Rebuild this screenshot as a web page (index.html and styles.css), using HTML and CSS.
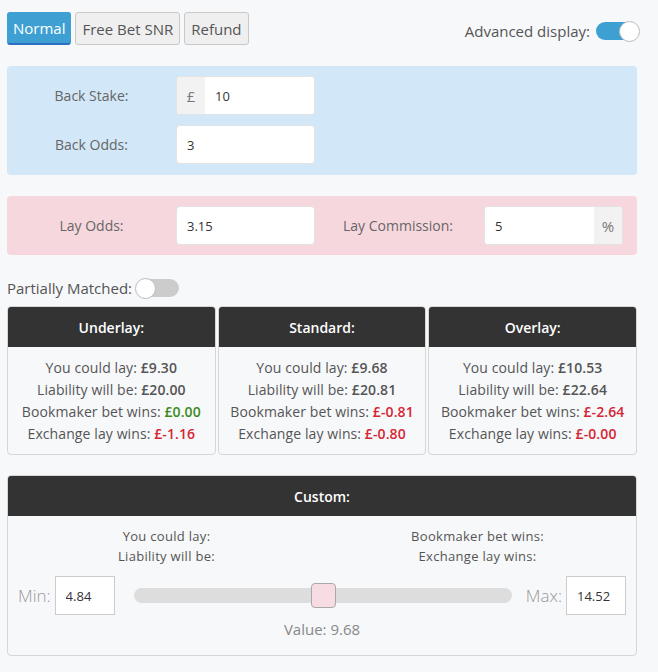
FILE: index.html
```html
<!DOCTYPE html>
<html lang="en">
<head>
    <meta charset="UTF-8">
    <title>Matched Betting Calculator</title>
    <link rel="stylesheet" href="styles.css">
</head>
<body>
    <div class="calc">
        <div class="top-bar">
            <div class="tabs">
                <button class="tab active">Normal</button>
                <button class="tab">Free Bet SNR</button>
                <button class="tab">Refund</button>
            </div>
            <div class="adv">
                <span>Advanced display:</span>
                <span class="switch on"><span class="knob"></span></span>
            </div>
        </div>

        <div class="panel back">
            <div class="field-row">
                <label class="lbl">Back Stake:</label>
                <div class="input-group">
                    <span class="addon">£</span>
                    <input type="text" value="10">
                </div>
            </div>
            <div class="field-row">
                <label class="lbl">Back Odds:</label>
                <input class="solo" type="text" value="3">
            </div>
        </div>

        <div class="panel lay">
            <div class="field-row">
                <label class="lbl">Lay Odds:</label>
                <input class="solo" type="text" value="3.15">
                <label class="lbl comm">Lay Commission:</label>
                <div class="input-group">
                    <input type="text" value="5">
                    <span class="addon right">%</span>
                </div>
            </div>
        </div>

        <div class="partial">
            <span>Partially Matched:</span>
            <span class="switch"><span class="knob"></span></span>
        </div>

        <div class="cards">
            <div class="card">
                <div class="card-head">Underlay:</div>
                <div class="card-body">
                    <p>You could lay: <b>£9.30</b></p>
                    <p>Liability will be: <b>£20.00</b></p>
                    <p>Bookmaker bet wins: <b class="pos">£0.00</b></p>
                    <p>Exchange lay wins: <b class="neg">£-1.16</b></p>
                </div>
            </div>
            <div class="card">
                <div class="card-head">Standard:</div>
                <div class="card-body">
                    <p>You could lay: <b>£9.68</b></p>
                    <p>Liability will be: <b>£20.81</b></p>
                    <p>Bookmaker bet wins: <b class="neg">£-0.81</b></p>
                    <p>Exchange lay wins: <b class="neg">£-0.80</b></p>
                </div>
            </div>
            <div class="card">
                <div class="card-head">Overlay:</div>
                <div class="card-body">
                    <p>You could lay: <b>£10.53</b></p>
                    <p>Liability will be: <b>£22.64</b></p>
                    <p>Bookmaker bet wins: <b class="neg">£-2.64</b></p>
                    <p>Exchange lay wins: <b class="neg">£-0.00</b></p>
                </div>
            </div>
        </div>

        <div class="card custom">
            <div class="card-head">Custom:</div>
            <div class="custom-body">
                <div class="custom-cols">
                    <div>
                        <p>You could lay:</p>
                        <p>Liability will be:</p>
                    </div>
                    <div>
                        <p>Bookmaker bet wins:</p>
                        <p>Exchange lay wins:</p>
                    </div>
                </div>
                <div class="slider-row">
                    <span class="mm">Min:</span>
                    <input class="mm-box" type="text" value="4.84">
                    <div class="track"><span class="thumb"></span></div>
                    <span class="mm">Max:</span>
                    <input class="mm-box" type="text" value="14.52">
                </div>
                <div class="value">Value: 9.68</div>
            </div>
        </div>
    </div>
</body>
</html>
```

FILE: styles.css
```css
body { margin: 0; background: #f7f8fa; font-family: "Open Sans", sans-serif; color: #555; }
.calc { width: 630px; padding: 12px 0 0 7px; }
p { margin: 0; }

.top-bar { display: flex; justify-content: space-between; align-items: flex-start; }
.tabs { display: flex; gap: 4px; }
.tab {
    font-family: "Open Sans", sans-serif;
    font-size: 15px;
    color: #555;
    background: #efefef;
    border: 1px solid #c9c9c9;
    border-radius: 3px;
    height: 33px;
    padding: 0 6px;
}
.tab.active { background: #3ea0d2; border-color: #3ea0d2; border-bottom: 2px solid #2d6fc4; color: #fff; padding: 0 5px; }
.adv { display: flex; align-items: center; gap: 6px; font-size: 15px; color: #555; margin: 9px -2px 0 0; }

.switch { display: inline-block; position: relative; width: 43px; height: 18px; border-radius: 9px; background: #ccc; }
.switch .knob { position: absolute; top: -1px; left: -1px; width: 19px; height: 19px; border-radius: 50%; background: #fff; border: 1px solid #bbb; }
.switch.on { background: #3ea0d2; }
.switch.on .knob { left: auto; right: -1px; }

.panel { border-radius: 4px; padding: 10px 0; }
.back { background: #d2e7f7; margin-top: 21px; height: 89px; display: flex; flex-direction: column; gap: 10px; }
.lay { background: #f7d7de; margin-top: 21px; height: 39px; }
.field-row { display: flex; align-items: center; }
.lbl { width: 169px; text-align: center; font-size: 14px; color: #666; flex-shrink: 0; }
.comm { width: 141px; margin-left: 14px; text-align: left; padding-left: 14px; }
input { font-family: "Open Sans", sans-serif; font-size: 13px; color: #333; outline: none; }
.solo, .input-group {
    width: 139px; height: 39px; box-sizing: border-box;
    border: 1px solid #e3e3e3; border-radius: 4px; background: #fff;
}
.solo { padding: 0 10px; }
.input-group { display: flex; overflow: hidden; }
.input-group input { border: none; flex: 1; min-width: 0; padding: 0 10px; }
.addon { width: 28px; background: #f2f2f2; display: flex; align-items: center; justify-content: center; font-size: 15px; color: #777; flex-shrink: 0; }

.partial { display: flex; align-items: center; gap: 4px; margin-top: 23px; font-size: 15px; color: #555; }

.cards { display: flex; gap: 2px; margin-top: 8px; }
.card { flex: 1; border: 1px solid #d6d6d6; border-radius: 4px; overflow: hidden; background: #f7f8fa; }
.card-head { background: #333; color: #fff; height: 40px; display: flex; align-items: center; justify-content: center; font-size: 14px; font-weight: 600; }
.card-body { padding: 10px 0 9px; text-align: center; font-size: 14px; letter-spacing: 0.1px; line-height: 22px; }
.card-body b { color: #555; font-weight: 600; }
.card-body b.pos { color: #3e8a1e; }
.card-body b.neg { color: #d52634; }

.custom { margin-top: 20px; width: 628px; }
.custom-body { padding: 10px 10px 16px; }
.custom-cols { display: flex; text-align: center; font-size: 13px; letter-spacing: 0.3px; line-height: 20px; }
.custom-cols div { flex: 1; }
.custom-cols div:first-child { margin-right: 14px; }
.slider-row { display: flex; align-items: center; margin-top: 10px; }
.mm { font-size: 17px; color: #999; font-weight: 300; }
.mm-box { width: 60px; height: 39px; box-sizing: border-box; border: 1px solid #ccc; padding: 0 10px; margin-left: 4px; background: #fff; }
.track { flex: 1; position: relative; height: 15px; border-radius: 8px; background: #ddd; margin: 0 14px 0 19px; }
.thumb { position: absolute; left: 177px; top: -5px; width: 23px; height: 23px; border: 1px solid #a9a9a9; border-radius: 4px; background: #f7dde3; }
.value { text-align: center; font-size: 15px; color: #888; margin-top: 4px; }
```
